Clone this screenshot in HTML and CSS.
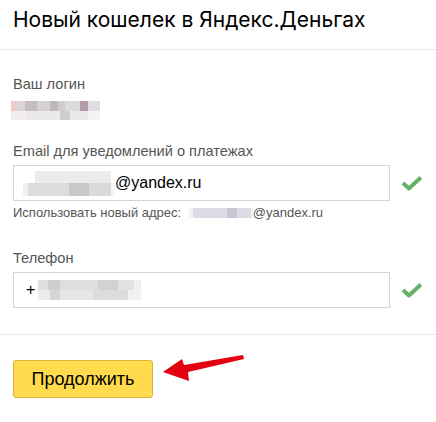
FILE: index.html
```html
<!DOCTYPE html>
<html lang="ru">
<head>
    <meta charset="UTF-8">
    <title>Новый кошелек в Яндекс.Деньгах</title>
    <link rel="stylesheet" href="styles.css">
</head>
<body>
    <div class="head">
        <h1>Новый кошелек в Яндекс.Деньгах</h1>
    </div>

    <div class="form">
        <div class="field">
            <div class="label">Ваш логин</div>
            <div class="blur blur-login"></div>
        </div>

        <div class="field field-email">
            <div class="label">Email для уведомлений о платежах</div>
            <div class="row">
                <div class="input">
                    <span class="blur blur-email"></span>
                    <span class="value">@yandex.ru</span>
                </div>
                <svg class="check" width="22" height="16" viewBox="0 0 22 16">
                    <path d="M2 8 L8 13.5 L20 2.5" fill="none" stroke="#67b067" stroke-width="4" stroke-linejoin="round"/>
                </svg>
            </div>
            <div class="hint">Использовать новый адрес: <span class="blur blur-hint"></span>@yandex.ru</div>
        </div>

        <div class="field field-phone">
            <div class="label">Телефон</div>
            <div class="row">
                <div class="input">
                    <span class="value">+</span>
                    <span class="blur blur-phone"></span>
                </div>
                <svg class="check" width="22" height="16" viewBox="0 0 22 16">
                    <path d="M2 8 L8 13.5 L20 2.5" fill="none" stroke="#67b067" stroke-width="4" stroke-linejoin="round"/>
                </svg>
            </div>
        </div>
    </div>

    <div class="actions">
        <button class="btn">Продолжить</button>
        <svg class="arrow" width="86" height="30" viewBox="0 0 86 30">
            <polygon points="0,18 19,5 21,11 80,1 81,5 25,18 26,27" fill="#e3000f"/>
        </svg>
    </div>
</body>
</html>
```

FILE: styles.css
```css
body {
    margin: 0;
    background-color: #fff;
    font-family: 'Liberation Sans', Arial, sans-serif;
    color: #000;
}
.head {
    height: 50px;
    border-bottom: 1px solid #e8e8e8;
    box-sizing: border-box;
    padding: 0 13px;
}
h1 {
    margin: 0;
    padding-top: 8px;
    font-family: 'Inter', sans-serif;
    font-weight: 400;
    font-size: 21px;
    line-height: 24px;
    letter-spacing: 0;
}
.form {
    padding: 26px 13px 0;
    border-bottom: 1px solid #e8e8e8;
    height: 285px;
    box-sizing: border-box;
}
.label {
    font-size: 14.6px;
    line-height: 16px;
    color: #555;
}
.blur {
    display: inline-block;
}
.blur-login {
    display: block;
    margin: 9px 0 0 -2px;
    width: 89px;
    height: 19px;
    background:
        linear-gradient(90deg, #f4c9c9 0 6px, #dcd6da 6px 14px, #c4bec4 14px 26px, #d4cfd3 26px 39px, #bdb9bd 39px 47px, #d0ccd0 47px 54px, #dcdadc 54px 69px, #b29dad 69px 77px, #dddde2 77px) top / 100% 10px no-repeat,
        linear-gradient(90deg, #f3eeee 0 14px, #ebe9eb 14px 49px, #cfcccf 49px 59px, #eaeaea 59px 77px, #f4f4f4 77px) bottom / 100% 9px no-repeat;
}
.field-email {
    margin-top: 23px;
}
.row {
    display: flex;
    align-items: center;
    margin-top: 6px;
}
.input {
    width: 380px;
    height: 36px;
    box-sizing: border-box;
    border: 1px solid #d4d4d4;
    display: flex;
    align-items: center;
    padding-left: 9px;
    font-size: 16px;
}
.check {
    margin-left: 11px;
}
.blur-email {
    width: 92px;
    height: 25px;
    background:
        linear-gradient(90deg, #fff 0 12px, #ececec 12px 88px, #fff 88px) top / 100% 12px no-repeat,
        linear-gradient(90deg, #f0f0f0 0 5px, #dcdcdc 5px 46px, #c9c9c9 46px 66px, #dadada 66px 88px, #f5f5f5 88px) bottom / 100% 13px no-repeat;
}
.value {
    color: #000;
}
.hint {
    margin-top: 5px;
    font-size: 13px;
    line-height: 14px;
    color: #555;
}
.blur-hint {
    width: 64px;
    height: 10px;
    margin-left: 4px;
    vertical-align: -1px;
    background: linear-gradient(90deg, #f3f3f6 0 4px, #dcdce6 4px 38px, #c8c6d2 38px 48px, #dcdce6 48px 62px, #f3f3f6 62px);
}
.field-phone {
    margin-top: 30px;
}
.field-phone .input {
    padding-left: 12px;
    font-size: 16px;
}
.blur-phone {
    width: 103px;
    height: 20px;
    margin-left: 3px;
    background:
        linear-gradient(90deg, #e0e0e0 0 10px, #cdcdcd 10px 22px, #dedede 22px 60px, #d2d2d2 60px 80px, #e2e2e2 80px 96px, #f0f0f0 96px) top / 100% 10px no-repeat,
        linear-gradient(90deg, #ececec 0 12px, #d6d6d6 12px 22px, #e6e6e6 22px 55px, #dcdcdc 55px 90px, #f2f2f2 90px) bottom / 100% 10px no-repeat;
}
.actions {
    display: flex;
    align-items: flex-start;
    padding: 25px 13px 0;
}
.btn {
    width: 140px;
    height: 38px;
    background-color: #ffdb4d;
    border: 1px solid #dcb23d;
    border-radius: 3px;
    font-family: 'Liberation Sans', Arial, sans-serif;
    font-size: 18px;
    color: #000;
    padding: 0;
}
.arrow {
    margin: -6px 0 0 10px;
}
```
